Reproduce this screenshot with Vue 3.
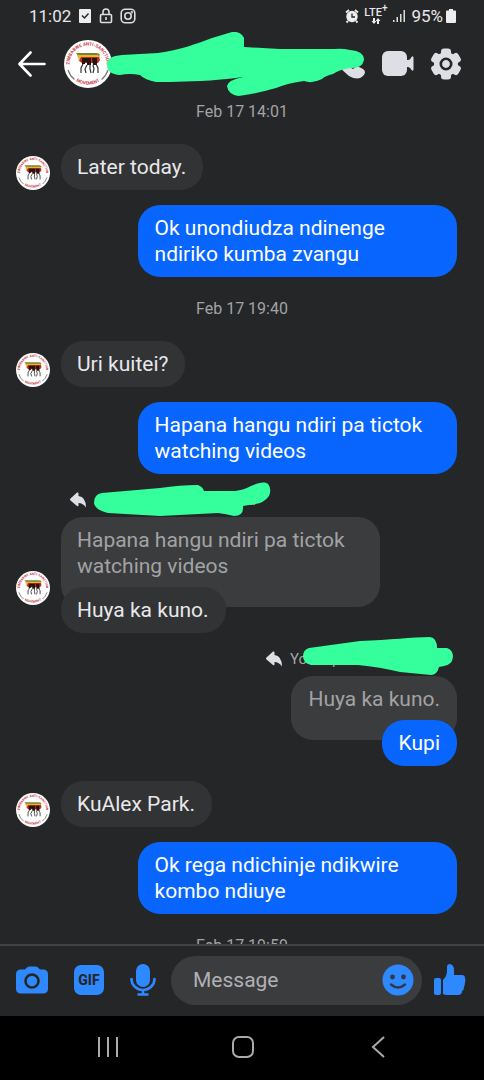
<script setup>
import { ref } from 'vue';

const draft = ref('');

const items = [
  { type: 'stamp', text: 'Feb 17 14:01' },
  { type: 'in', text: 'Later today.' },
  { type: 'out', text: 'Ok unondiudza ndinenge ndiriko kumba zvangu' },
  { type: 'stamp', text: 'Feb 17 19:40' },
  { type: 'in', text: 'Uri kuitei?' },
  { type: 'out', text: 'Hapana hangu ndiri pa tictok watching videos' },
  {
    type: 'in',
    text: 'Huya ka kuno.',
    quote: 'Hapana hangu ndiri pa tictok watching videos',
    label: 'replied to you',
  },
  { type: 'out', text: 'Kupi', quote: 'Huya ka kuno.', label: 'You replied' },
  { type: 'in', text: 'KuAlex Park.' },
  { type: 'out', text: 'Ok rega ndichinje ndikwire kombo ndiuye' },
  { type: 'stamp', text: 'Feb 17 19:59' },
];
</script>

<template>
  <div class="phone">
    <div class="status">
      <div class="status__side">
        <span class="status__time">11:02</span>
        <svg width="14" height="16" viewBox="0 0 14 16">
          <rect x="1" y="1" width="12" height="14" rx="1" fill="#eee" />
          <path d="M4 7.500l2.500 2.500 4-4.500" fill="none" stroke="#252628" stroke-width="1.500" />
        </svg>
        <svg width="14" height="16" viewBox="0 0 14 16" fill="none" stroke="#ddd" stroke-width="1.600">
          <rect x="1.500" y="6.500" width="11" height="8" rx="1" />
          <path d="M4 6V4a3 3 0 0 1 6 0v2M7 9v3" />
        </svg>
        <svg width="16" height="16" viewBox="0 0 16 16" fill="none" stroke="#ddd" stroke-width="1.600">
          <rect x="1.200" y="1.200" width="13.600" height="13.600" rx="4" />
          <circle cx="8" cy="8" r="3.200" />
          <circle cx="11.800" cy="4.300" r=".4" />
        </svg>
      </div>
      <div class="status__side status__side--right">
        <svg width="14" height="16" viewBox="0 0 14 16">
          <circle cx="7" cy="8.500" r="5.700" fill="#eee" />
          <path d="M1 4.500L4 2M13 4.500L10 2M3 13l-1.500 1.500M11 13l1.500 1.500" stroke="#eee" stroke-width="1.800" />
          <path d="M7 5.500V9h3" fill="none" stroke="#252628" stroke-width="1.300" />
        </svg>
        <span class="lte">
          <span>LTE<sup class="lte__plus">+</sup></span>
          <svg width="10" height="6" viewBox="0 0 10 6" fill="#eee">
            <path d="M2 0h2v3h1.500L3 6 .5 3H2zM6 6h2V3h1.500L7 0 4.700 3H6z" />
          </svg>
        </span>
        <svg width="14" height="14" viewBox="0 0 14 14" fill="#ddd">
          <path d="M1 11h1.500v2H1zM4.500 8H6v5H4.500zM8 5h1.500v8H8zM11.500 1H13v12h-1.500z" />
        </svg>
        <span class="status__battery">
          95%
          <svg width="10" height="14" viewBox="0 0 10 14" fill="#eee">
            <path d="M3 0h4v1.500h2q1 0 1 1V13q0 1-1 1H1q-1 0-1-1V2.500q0-1 1-1h2z" />
          </svg>
        </span>
      </div>
    </div>

    <header class="header">
      <button class="icon-button" aria-label="Back">
        <svg width="28" height="28" viewBox="0 0 28 28" fill="none" stroke="#fff" stroke-width="2.600" stroke-linecap="round" stroke-linejoin="round">
          <path d="M26.500 14H2M12.500 2.500L1.500 14l11 11.500" />
        </svg>
      </button>
      <!-- the message avatars reuse this group -->
      <svg class="header__avatar" viewBox="0 0 48 48" role="img" aria-label="Profile picture">
        <g id="avatar">
          <circle cx="24" cy="24" r="24" fill="#fff" />
          <path id="arc-top" d="M6.500 30 A18.500 18.500 0 1 1 41.500 30" fill="none" />
          <path id="arc-bottom" d="M8 37.500 A21.500 21.500 0 0 0 40 37.500" fill="none" />
          <g fill="#c9384a" font-family="Roboto, sans-serif" font-weight="700" text-anchor="middle">
            <text font-size="4.500">
              <textPath href="#arc-top" startOffset="50%">ZIMBABWE ANTI-SANCTION</textPath>
            </text>
            <text font-size="4.500">
              <textPath href="#arc-bottom" startOffset="50%">MOVEMENT</textPath>
            </text>
          </g>
          <path d="M4 30Q6 36 10.500 39.500M44 30Q42 36 37.500 39.500" fill="none" stroke="#777" stroke-width="1.200" />
          <path d="M12 13h20q3 0 4 2l-2 2H15z" fill="#75852c" />
          <path d="M13 15h21l2 2-2 4H15z" fill="#e5b83a" />
          <path d="M17 17h18l1 3-2 3H18l-3-2z" fill="#c62a20" />
          <path d="M18 18h9v7h-4v-3h-2v2h-3zM28 18h5v7h-4z" fill="#25150f" />
          <path
            d="M19 24l-2 4v5M23 25l-2 4 1 4M26 24v5l1 4M29 25l1 4-1 4M32 24l2 4v5"
            fill="none"
            stroke="#333"
            stroke-width="1.200"
          />
        </g>
      </svg>
      <div class="header__name">
        <svg class="marker marker--name" viewBox="107 32 258 65" aria-hidden="true">
          <path
            d="M107 65C107 58 112 56 122 55L158 53C180 50 196 44 212 38L232 32Q241 31 244 38V47L280 49H334Q342 48 350 50Q364 51 364 60Q362 69 350 68Q338 70 333 74Q325 76 322 79Q312 84 304 81Q288 83 276 88C262 92 248 95 238 96Q228 94 227 86Q228 80 243 77Q220 80 200 81L170 82H156Q145 80 140 75Q130 73 120 75Q107 74 107 65Z"
          />
        </svg>
      </div>
      <button class="icon-button header__call" aria-label="Call">
        <svg width="30" height="30" viewBox="0 0 30 30" fill="#dedfe5">
          <path d="M4 2q4-3 7 2l2 4q0 2-3 4 3 6 8 8 3-3 6-2l4 2q4 3 0 7-5 5-14 0Q0 16 1 8 1 4 4 2z" />
        </svg>
      </button>
      <button class="icon-button" aria-label="Video call">
        <svg width="32" height="26" viewBox="0 0 32 26" fill="#dedfe5">
          <rect x="0" y="0" width="25" height="25" rx="6" />
          <path d="M24 9h2q1.500 0 2.500-1.500l1-1.500q2-2 2 1v11q0 3-2 1l-1-1.500Q27.500 16 26 16h-2z" />
        </svg>
      </button>
      <button class="icon-button header__settings" aria-label="Settings">
        <svg width="32" height="32" viewBox="-16 -16 32 32" fill="#dedfe5">
          <circle r="12" />
          <rect x="-5" y="-15.500" width="10" height="31" rx="3" />
          <rect x="-5" y="-15.500" width="10" height="31" rx="3" transform="rotate(60)" />
          <rect x="-5" y="-15.500" width="10" height="31" rx="3" transform="rotate(120)" />
          <circle r="5.200" fill="none" stroke="#252628" stroke-width="2.600" />
        </svg>
      </button>
    </header>

    <main class="thread">
      <template v-for="(item, index) in items" :key="index">
        <time v-if="item.type === 'stamp'" class="stamp">{{ item.text }}</time>
        <div
          v-else
          class="message"
          :class="[`message--${item.type}`, { 'message--reply': item.quote }]"
        >
          <svg v-if="item.type === 'in'" class="message__avatar" viewBox="0 0 48 48" aria-hidden="true">
            <use href="#avatar" />
          </svg>
          <div class="message__body">
            <div v-if="item.quote" class="reply">
              <svg width="16" height="16" viewBox="0 0 16 16" fill="#dedfe5">
                <path d="M0.500 6.500L7 0.500Q8.500 0 8.500 1.500V4Q16 5 16 15.500Q13 11 8.500 11V13Q8.500 15 7 14L0.500 8.500Q-.5 7.500 .5 6.500z" />
              </svg>
              <div class="reply__label" :class="`reply__label--${item.type}`">
                <span>{{ item.label }}</span>
                <svg v-if="item.type === 'out'" class="marker marker--out" viewBox="302 636 152 40" aria-hidden="true">
                  <path d="M309 648L360 641C390 640 412 637 430 637Q437 638 437 648H447Q453 650 453 657Q452 665 444 666L439 667Q437 675 431 675L400 672Q380 667 358 665H311Q303 663 303 656Q303 650 309 648Z" />
                </svg>
                <svg v-else class="marker marker--in" viewBox="94 481 178 37" aria-hidden="true">
                  <path d="M102 493L160 488Q180 485 198 485Q203 487 204 491L235 491Q244 490 251 486C258 483 264 481 268 484Q272 489 269 496Q264 503 255 504L243 506Q244 516 234 516Q226 514 218 513L160 516L108 513Q95 510 94 503Q94 494 102 493Z" />
                </svg>
              </div>
            </div>
            <p v-if="item.quote" class="bubble bubble--quote">{{ item.quote }}</p>
            <p class="bubble" :class="{ 'bubble--over': item.quote }">{{ item.text }}</p>
          </div>
        </div>
      </template>
    </main>

    <footer class="composer">
      <button class="icon-button" aria-label="Camera">
        <svg width="32" height="28" viewBox="0 0 32 28" fill="#2e89ff">
          <path d="M5 3.500h4L11 1.500Q12 .5 14 .5h5q2 0 3 1l2 2h3q5 0 5 5v14q0 5-5 5H5q-5 0-5-5v-14q0-5 5-5z" />
          <circle cx="16" cy="15" r="6.500" fill="none" stroke="#252628" stroke-width="2.600" />
        </svg>
      </button>
      <button class="icon-button gif" aria-label="Choose a GIF">GIF</button>
      <button class="icon-button" aria-label="Voice message">
        <svg width="26" height="32" viewBox="0 0 26 32" fill="#2e89ff">
          <rect x="6" y="0" width="14" height="23" rx="7" />
          <path d="M1.500 15a11.500 11 0 0 0 23 0M13 26v4M8.500 30.500h9" fill="none" stroke="#2e89ff" stroke-width="2.600" stroke-linecap="round" />
        </svg>
      </button>
      <div class="field">
        <input v-model="draft" class="field__input" type="text" placeholder="Message" aria-label="Message" />
        <button class="icon-button" aria-label="Emoji">
          <svg width="32" height="32" viewBox="0 0 32 32">
            <circle cx="16" cy="16" r="15.500" fill="#2e89ff" />
            <circle cx="10.500" cy="13" r="2.400" fill="#303844" />
            <circle cx="21.500" cy="13" r="2.400" fill="#303844" />
            <path d="M9 20.500q7 6 14 0" fill="none" stroke="#303844" stroke-width="2.400" stroke-linecap="round" />
          </svg>
        </button>
      </div>
      <button class="icon-button" aria-label="Like">
        <svg class="like" width="32" height="32" viewBox="0 0 32 32" fill="#2e89ff">
          <rect x="0" y="14" width="7" height="17" rx="2" />
          <path d="M9 16q4-4 4-9V3q0-3 3-3 4 1 4 6v5h8q3 0 3 3 1 2 0 4 0 3-1 5 0 3-2 4 0 4-4 4H13q-3 0-4-1z" />
        </svg>
      </button>
    </footer>

    <nav class="system">
      <button class="icon-button" aria-label="Recent apps">
        <svg width="22" height="22" viewBox="0 0 22 22" stroke="#aaa" stroke-width="2">
          <path d="M2 1v20M11 1v20M20 1v20" />
        </svg>
      </button>
      <button class="icon-button" aria-label="Home">
        <svg width="22" height="22" viewBox="0 0 22 22" fill="none" stroke="#aaa" stroke-width="2">
          <rect x="1" y="1" width="20" height="20" rx="6" />
        </svg>
      </button>
      <button class="icon-button" aria-label="Back">
        <svg width="22" height="22" viewBox="0 0 22 22" fill="none" stroke="#aaa" stroke-width="2">
          <path d="M17 1L6 11l11 10" />
        </svg>
      </button>
    </nav>
  </div>
</template>

<style>
body {
  margin: 0;
  background: #252628;
}
</style>

<style scoped>
.phone {
  display: flex;
  flex-direction: column;
  height: 100vh;
  color: #e8e8ea;
  font-family: Roboto, 'Liberation Sans', sans-serif;
  background: #252628;
}

.icon-button {
  display: flex;
  flex: none;
  align-items: center;
  justify-content: center;
  padding: 0;
  border: 0;
  background: none;
  cursor: pointer;
}

.status {
  display: flex;
  flex: none;
  align-items: center;
  justify-content: space-between;
  height: 32px;
  padding: 0 28px 0 29px;
  font-size: 17px;
}

.status__side {
  display: flex;
  align-items: center;
  gap: 7px;
}

.status__side--right {
  gap: 5px;
}

.status__battery {
  display: flex;
  align-items: center;
  gap: 3px;
}

.lte {
  display: flex;
  flex-direction: column;
  align-items: center;
  font-size: 11px;
  font-weight: 500;
  line-height: 10px;
}

.lte__plus {
  font-size: 10px;
  line-height: 0;
}

.header {
  display: flex;
  flex: none;
  align-items: center;
  height: 64px;
  padding: 0 22px 0 18px;
}

.header__avatar {
  flex: none;
  width: 48px;
  height: 48px;
  margin-left: 18px;
}

.header__name {
  position: relative;
  flex: 1;
  align-self: stretch;
}

.header__call {
  margin-right: 17px;
}

.header__settings {
  margin-left: 16px;
}

.marker {
  position: absolute;
  fill: #35ff9d;
}

.marker--name {
  top: 0;
  left: -5px;
  width: 258px;
  height: 65px;
}

.marker--in {
  top: -10px;
  left: 0;
  width: 178px;
  height: 37px;
}

.marker--out {
  top: -14px;
  left: 12px;
  width: 152px;
  height: 40px;
}

.thread {
  flex: 1;
  min-height: 0;
  padding: 6px 27px 0 16px;
  overflow: hidden;
}

/* runs to the same inset on both sides, so it centres on the screen */
.stamp {
  display: block;
  margin: 22px -11px 22px 0;
  color: #a2a3a5;
  font-size: 16px;
  line-height: 20px;
  text-align: center;
}

.stamp:first-child {
  margin-top: 0;
}

.message {
  display: flex;
  align-items: flex-end;
  gap: 11px;
}

.message + .message {
  margin-top: 15px;
}

.message--out {
  justify-content: flex-end;
}

.message__avatar {
  flex: none;
  width: 34px;
  height: 34px;
}

.message--reply .message__avatar {
  margin-bottom: 28px;
}

.message__body {
  display: flex;
  flex-direction: column;
  align-items: flex-start;
  max-width: 66vw;
}

.message--out .message__body {
  align-items: flex-end;
}

.reply {
  display: flex;
  align-items: center;
  gap: 8px;
  padding: 2px 0 8px 9px;
}

.reply__label {
  position: relative;
  box-sizing: border-box;
  height: 18px;
  color: #a2a3a5;
  font-size: 15px;
  line-height: 18px;
}

.reply__label--in {
  width: 178px;
  padding-right: 16px;
  text-align: right;
}

.reply__label--out {
  width: 167px;
}

.bubble {
  margin: 0;
  padding: 10px 17px 10px 16px;
  border-radius: 22px;
  font-size: 21px;
  line-height: 26px;
  background: #323335;
}

.message--out .bubble {
  padding-left: 17px;
  color: #fff;
  background: #0866ff;
}

.message .bubble--quote {
  padding-bottom: 28px;
  color: #a2a3a5;
  background: #3b3c3e;
}

.bubble--over {
  position: relative;
  margin-top: -20px;
}

.composer {
  display: flex;
  flex: none;
  align-items: center;
  gap: 26px;
  box-sizing: border-box;
  height: 72px;
  padding: 0 18px 2px 16px;
  border-top: 2px solid #414244;
}

.gif {
  width: 30px;
  height: 30px;
  border-radius: 7px;
  color: #252628;
  font-family: Roboto, sans-serif;
  font-size: 14px;
  font-weight: 800;
  background: #2e89ff;
}

.field {
  display: flex;
  flex: 1;
  align-items: center;
  box-sizing: border-box;
  min-width: 0;
  height: 49px;
  margin: 0 -14px 0 -11px;
  padding: 0 8px 0 22px;
  border-radius: 25px;
  background: #3b3c3e;
}

.field__input {
  flex: 1;
  min-width: 0;
  padding: 0;
  border: 0;
  outline: 0;
  color: #e8e8ea;
  font-family: inherit;
  font-size: 21px;
  background: none;
}

.field__input::placeholder {
  color: #b0b1b3;
}

.system {
  display: flex;
  flex: none;
  align-items: center;
  justify-content: space-between;
  box-sizing: border-box;
  height: 64px;
  padding: 0 95px 2px 97px;
  background: #000;
}
</style>
